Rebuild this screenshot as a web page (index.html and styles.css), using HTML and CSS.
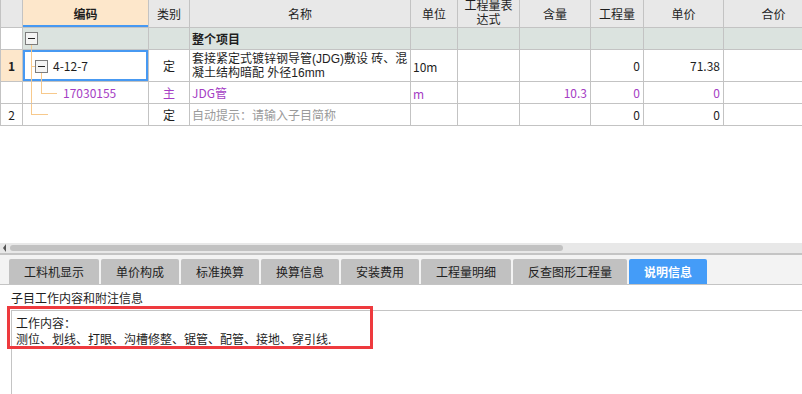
FILE: index.html
```html
<!DOCTYPE html>
<html lang="zh-CN">
<head>
    <meta charset="UTF-8">
    <title>子目说明信息</title>
    <link rel="stylesheet" href="styles.css">
</head>
<body>

    <div class="grid-wrap">
        <table class="grid">
            <colgroup>
                <col style="width:22px">
                <col style="width:126px">
                <col style="width:41px">
                <col style="width:221px">
                <col style="width:47px">
                <col style="width:62px">
                <col style="width:71px">
                <col style="width:53px">
                <col style="width:80px">
                <col style="width:100px">
            </colgroup>
            <thead>
                <tr>
                    <th class="num"></th>
                    <th class="code-head">编码</th>
                    <th>类别</th>
                    <th>名称</th>
                    <th>单位</th>
                    <th class="wrap">工程量表<br>达式</th>
                    <th>含量</th>
                    <th>工程量</th>
                    <th>单价</th>
                    <th>合价</th>
                </tr>
            </thead>
            <tbody>
                <tr class="group">
                    <td class="num"></td>
                    <td class="code">
                        <span class="box" style="left:2px;top:4px"></span>
                        <span class="vline" style="left:8px;top:17px;bottom:0"></span>
                    </td>
                    <td></td>
                    <td class="name bold">整个项目</td>
                    <td></td><td></td><td></td><td></td><td></td><td></td>
                </tr>
                <tr class="tall">
                    <td class="num current">1</td>
                    <td class="code selected">
                        <span class="vline" style="left:8px;top:0;bottom:0"></span>
                        <span class="hline" style="left:8px;top:16px;width:4px"></span>
                        <span class="box" style="left:12px;top:10px"></span>
                        <span class="vline" style="left:18px;top:23px;bottom:0"></span>
                        <span class="code-text lvl1">4-12-7</span>
                    </td>
                    <td class="center">定</td>
                    <td class="name two-line">套接紧定式镀锌钢导管(JDG)敷设 砖、混<br>凝土结构暗配 外径16mm</td>
                    <td class="unit">10m</td>
                    <td></td>
                    <td></td>
                    <td class="right">0</td>
                    <td class="right">71.38</td>
                    <td></td>
                </tr>
                <tr class="sub">
                    <td class="num"></td>
                    <td class="code">
                        <span class="vline" style="left:8px;top:0;bottom:0"></span>
                        <span class="vline" style="left:18px;top:0;height:11px"></span>
                        <span class="hline" style="left:18px;top:11px;width:16px"></span>
                        <span class="code-text lvl2">17030155</span>
                    </td>
                    <td class="center">主</td>
                    <td class="name">JDG管</td>
                    <td class="unit">m</td>
                    <td></td>
                    <td class="right">10.3</td>
                    <td class="right">0</td>
                    <td class="right">0</td>
                    <td></td>
                </tr>
                <tr>
                    <td class="num plain">2</td>
                    <td class="code">
                        <span class="vline" style="left:8px;top:0;height:10px"></span>
                        <span class="hline" style="left:8px;top:10px;width:17px"></span>
                    </td>
                    <td class="center">定</td>
                    <td class="name hint">自动提示：请输入子目简称</td>
                    <td></td>
                    <td></td>
                    <td></td>
                    <td class="right">0</td>
                    <td class="right">0</td>
                    <td></td>
                </tr>
            </tbody>
        </table>
    </div>

    <div class="hscroll">
        <span class="arrow"></span>
        <span class="thumb"></span>
    </div>

    <div class="tabbar">
        <div class="tab" style="width:90px">工料机显示</div>
        <div class="tab" style="width:78px">单价构成</div>
        <div class="tab" style="width:78px">标准换算</div>
        <div class="tab" style="width:78px">换算信息</div>
        <div class="tab" style="width:78px">安装费用</div>
        <div class="tab" style="width:90px">工程量明细</div>
        <div class="tab" style="width:114px">反查图形工程量</div>
        <div class="tab active" style="width:78px">说明信息</div>
    </div>

    <div class="notes">
        <div class="notes-title">子目工作内容和附注信息</div>
        <div class="notes-panel">
            <div class="mark"></div>
            <p>工作内容：<br>测位、划线、打眼、沟槽修整、锯管、配管、接地、穿引线.</p>
        </div>
    </div>

</body>
</html>
```

FILE: styles.css
```css
:root {
    --grid-line: #c3c3c3;
    --head-bg: #e8e8e8;
    --peach: #fde7cb;
    --group-bg: #dbe3df;
    --blue: #4799f2;
    --purple: #a53dc4;
    --tree: #f7c98c;
    --text: #1e1e1e;
}

body {
    margin: 0;
    background: #fff;
    color: var(--text);
    font-family: "Noto Sans CJK SC", "Noto Sans", sans-serif;
    font-size: 12px;
    width: 802px;
    height: 394px;
    overflow: hidden;
}

.grid-wrap {
    height: 243px;
    overflow: hidden;
}

.grid {
    border-collapse: collapse;
    table-layout: fixed;
    width: 823px;
}

.grid th,
.grid td {
    border: 1px solid var(--grid-line);
    padding: 0 3px;
    line-height: 14px;
    white-space: nowrap;
    overflow: hidden;
}

.grid th {
    height: 27px;
    background: var(--head-bg);
    font-weight: normal;
    text-align: center;
    border-top: none;
}

/* two-line cells: latin primary font keeps the line boxes tight */
.grid th.wrap,
.grid td.two-line {
    font-family: "Liberation Sans", "Noto Sans CJK SC", sans-serif;
}

.grid th.wrap {
    line-height: 13.5px;
    padding: 0;
}

.grid th:first-child,
.grid td:first-child {
    border-left: 1px solid var(--grid-line);
}

.grid th.code-head {
    background: var(--peach);
    font-weight: bold;
    box-shadow: inset 0 -2px 0 var(--blue);
}

.grid tbody tr { height: 22px; }
.grid tbody tr.tall { height: 32px; }

.grid tr.group td { background: var(--group-bg); }
.grid tr.group td.num { background: #fff; }

.grid td.num {
    padding: 0;
    text-align: center;
    font-weight: bold;
}

.grid td.current { background: var(--peach); }
.grid td.plain { font-weight: normal; }

.grid td.code {
    position: relative;
    padding: 0;
}

.grid td.selected { box-shadow: inset 0 0 0 2px var(--blue); }

.code-text { display: inline-block; }
.code-text.lvl1 { padding-left: 30px; }
.code-text.lvl2 { padding-left: 40px; color: var(--purple); }

.box {
    position: absolute;
    width: 11px;
    height: 11px;
    border: 1px solid #7d7d7d;
    background: #f4f4f4;
}

.box::after {
    content: "";
    position: absolute;
    left: 2px;
    right: 2px;
    top: 5px;
    height: 1px;
    background: #222;
}

.vline {
    position: absolute;
    width: 1px;
    background: var(--tree);
}

.hline {
    position: absolute;
    height: 1px;
    background: var(--tree);
}

.grid td.center { text-align: center; }
.grid td.right { text-align: right; padding-right: 3px; }
.grid td.name { padding-left: 2px; }
.grid td.two-line { line-height: 14px; }
.grid td.bold { font-weight: bold; }
.grid td.hint { color: #9a9a9a; }
.grid td.unit { padding-left: 2px; padding-top: 3px; }

.grid tr.sub td { color: var(--purple); }

.hscroll {
    height: 10px;
    background: #e8e8e8;
    border-bottom: 2px solid #c4c4c4;
    display: flex;
    align-items: center;
    padding-left: 3px;
}

.arrow {
    width: 0;
    height: 0;
    border-top: 4px solid transparent;
    border-bottom: 4px solid transparent;
    border-right: 3px solid #555;
}

.thumb {
    margin-left: 4px;
    width: 553px;
    height: 6px;
    border-radius: 3px;
    background: #c2c2c2;
}

.tabbar {
    height: 29px;
    background: #f3f3f3;
    border-bottom: 1px solid #c4c4c4;
    display: flex;
    align-items: flex-end;
    gap: 2px;
    padding-left: 9px;
}

.tab {
    height: 25px;
    line-height: 25px;
    text-align: center;
    background: #c1c1c1;
    border-radius: 2px 2px 0 0;
    color: #222;
}

.tab.active {
    background: #449cf8;
    color: #fff;
    font-weight: bold;
}

.notes-title {
    padding: 5px 0 0 11px;
    line-height: 15px;
}

.notes-panel {
    position: relative;
    margin: 5px 0 0 11px;
    height: 90px;
    border-top: 1px solid #c4c4c4;
    border-left: 1px solid #c4c4c4;
}

.notes-panel p {
    margin: 0;
    padding: 4px 0 0 4px;
    line-height: 16px;
}

.mark {
    position: absolute;
    left: -5px;
    top: -5px;
    width: 360px;
    height: 37px;
    border: 3px solid #ee3a3e;
}
```
